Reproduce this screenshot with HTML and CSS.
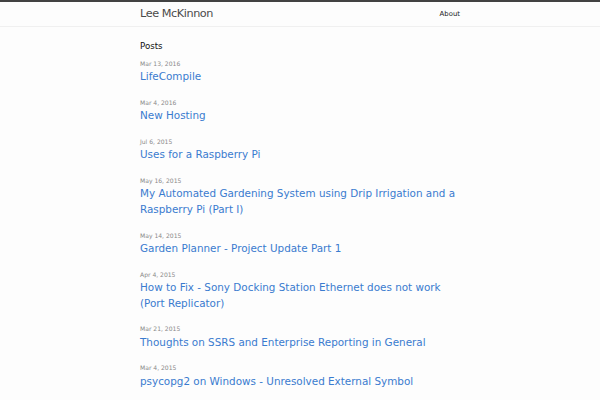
FILE: index.html
```html
<!DOCTYPE html>
<html lang="en">
<head>
    <meta charset="UTF-8">
    <meta name="viewport" content="width=device-width, initial-scale=1.0">
    <title>Lee McKinnon</title>
    <link rel="stylesheet" href="styles.css">
</head>
<body>
    <header class="site-header">
        <div class="wrapper header-inner">
            <a class="site-title" href="#">Lee McKinnon</a>
            <nav class="site-nav">
                <a class="page-link" href="#">About</a>
            </nav>
        </div>
    </header>

    <main class="page-content">
        <div class="wrapper">
            <h1 class="page-heading">Posts</h1>
            <ul class="post-list">
                <li>
                    <span class="post-meta">Mar 13, 2016</span>
                    <h2><a class="post-link" href="#">LifeCompile</a></h2>
                </li>
                <li>
                    <span class="post-meta">Mar 4, 2016</span>
                    <h2><a class="post-link" href="#">New Hosting</a></h2>
                </li>
                <li>
                    <span class="post-meta">Jul 6, 2015</span>
                    <h2><a class="post-link" href="#">Uses for a Raspberry Pi</a></h2>
                </li>
                <li>
                    <span class="post-meta">May 16, 2015</span>
                    <h2><a class="post-link" href="#">My Automated Gardening System using Drip Irrigation and a Raspberry Pi (Part I)</a></h2>
                </li>
                <li>
                    <span class="post-meta">May 14, 2015</span>
                    <h2><a class="post-link" href="#">Garden Planner - Project Update Part 1</a></h2>
                </li>
                <li>
                    <span class="post-meta">Apr 4, 2015</span>
                    <h2><a class="post-link" href="#">How to Fix - Sony Docking Station Ethernet does not work (Port Replicator)</a></h2>
                </li>
                <li>
                    <span class="post-meta">Mar 21, 2015</span>
                    <h2><a class="post-link" href="#">Thoughts on SSRS and Enterprise Reporting in General</a></h2>
                </li>
                <li>
                    <span class="post-meta">Mar 4, 2015</span>
                    <h2><a class="post-link" href="#">psycopg2 on Windows - Unresolved External Symbol</a></h2>
                </li>
            </ul>
        </div>
    </main>
</body>
</html>
```

FILE: styles.css
```css
body {
    margin: 0;
    font-family: "DejaVu Sans", sans-serif;
    font-size: 6.92px;
    line-height: 1.5;
    color: #111;
    background-color: #fdfdfd;
}

a {
    text-decoration: none;
}

.wrapper {
    max-width: 320px;
    margin: 0 auto;
}

/* header */
.site-header {
    border-top: 2.2px solid #424242;
    border-bottom: 1px solid #f0f0f0;
}

.header-inner {
    display: flex;
    justify-content: space-between;
    align-items: center;
    height: 24px;
}

.site-title {
    font-size: 11.25px;
    letter-spacing: -0.43px;
    color: #4a4a4a;
}

.page-link {
    color: #222;
    line-height: 10.4px;
}

/* posts */
.page-content {
    padding: 12.5px 0;
}

.page-heading {
    margin: 0 0 6.5px;
    font-size: 8.65px;
    font-weight: normal;
    line-height: 13px;
}

.post-list {
    list-style: none;
    margin: 0;
    padding: 0;
}

.post-list li {
    display: flex;
    flex-direction: column;
    margin-bottom: 13px;
}

.post-meta {
    font-size: 6.05px;
    line-height: 10.4px;
    color: #8a8a8a;
}

.post-list h2 {
    margin: 0;
    font-size: 10.4px;
    font-weight: normal;
    line-height: 15.6px;
}

.post-link {
    color: #3a7bcf;
}
```
